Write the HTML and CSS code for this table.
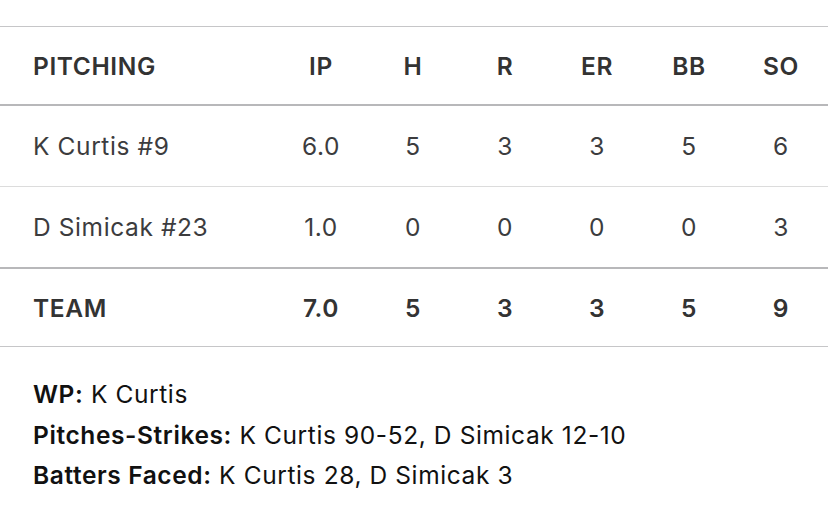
FILE: index.html
```html
<!DOCTYPE html>
<html>
<head>
<meta charset="utf-8">
<link rel="stylesheet" href="styles.css">
</head>
<body>
<div class="box">
  <div class="row head">
    <div class="name">PITCHING</div>
    <div class="c">IP</div><div class="c">H</div><div class="c">R</div><div class="c">ER</div><div class="c">BB</div><div class="c">SO</div>
  </div>
  <div class="row player">
    <div class="name">K Curtis #9</div>
    <div class="c">6.0</div><div class="c">5</div><div class="c">3</div><div class="c">3</div><div class="c">5</div><div class="c">6</div>
  </div>
  <div class="row player last">
    <div class="name">D Simicak #23</div>
    <div class="c">1.0</div><div class="c">0</div><div class="c">0</div><div class="c">0</div><div class="c">0</div><div class="c">3</div>
  </div>
  <div class="row team">
    <div class="name">TEAM</div>
    <div class="c">7.0</div><div class="c">5</div><div class="c">3</div><div class="c">3</div><div class="c">5</div><div class="c">9</div>
  </div>
  <div class="notes">
    <p><b>WP:</b> K Curtis</p>
    <p><b>Pitches-Strikes:</b> K Curtis 90-52, D Simicak 12-10</p>
    <p><b>Batters Faced:</b> K Curtis 28, D Simicak 3</p>
  </div>
</div>
</body>
</html>
```
FILE: styles.css
```css
html, body {
  margin: 0;
  padding: 0;
  background: #fff;
}
body {
  font-family: Inter, "Liberation Sans", sans-serif;
  font-size: 24.5px;
  letter-spacing: 0.6px;
  color: #3c3c3e;
}
.box {
  padding-top: 26px;
}
.row {
  display: grid;
  grid-template-columns: 275px repeat(6, 92px);
  align-items: center;
  height: 80px;
  border-top: 1px solid #c6c6c8;
}
.row .name {
  padding-left: 33px;
}
.row .c {
  text-align: center;
}
.head {
  height: 77px;
  font-weight: 600;
  color: #333;
}
.player {
  border-top: 1px solid #dcdcdc;
}
.head + .player {
  border-top: 2px solid #b8b8ba;
  height: 80px;
}
.team {
  border-top: 2px solid #b8b8ba;
  border-bottom: 1px solid #c6c6c8;
  height: 77px;
  font-weight: 600;
  color: #333;
}
.notes {
  padding: 27px 33px 0;
  color: #111;
}
.notes p {
  margin: 0;
  line-height: 40.5px;
}
.notes b {
  font-weight: 600;
}
```
